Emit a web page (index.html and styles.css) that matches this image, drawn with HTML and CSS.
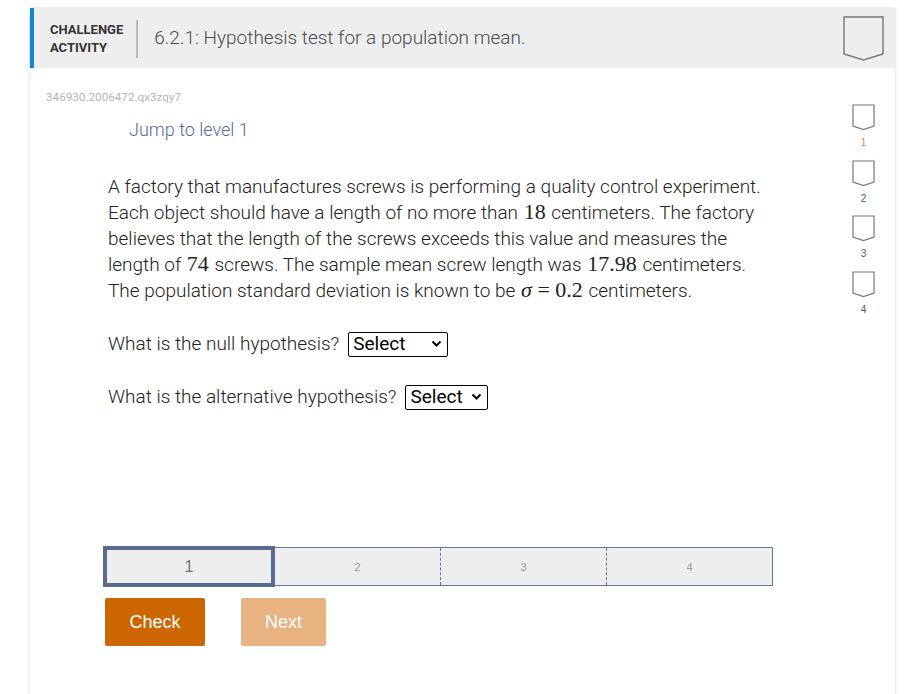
FILE: index.html
```html
<!DOCTYPE html>
<html>
<head>
<meta charset="utf-8">
<link rel="stylesheet" href="styles.css">
</head>
<body>
<div class="card">
  <div class="header">
    <div class="kind">CHALLENGE<br>ACTIVITY</div>
    <div class="title">6.2.1: Hypothesis test for a population mean.</div>
    <svg class="big-shield" width="42" height="46" viewBox="0 0 42 46"><path d="M1 1 H40 V38 L20.5 44 L1 38 Z" fill="none" stroke="#777" stroke-width="1.4"/></svg>
  </div>
  <div class="body">
    <div class="main">
      <div class="uid">346930.2006472.qx3zqy7</div>
      <div class="jump">Jump to level 1</div>
      <p class="problem">A factory that manufactures screws is performing a quality control experiment. Each object should have a length of no more than <span class="m">18</span> centimeters. The factory believes that the length of the screws exceeds this value and measures the length of <span class="m">74</span> screws. The sample mean screw length was <span class="m">17.98</span> centimeters. The population standard deviation is known to be <span class="m"><i>σ</i> = 0.2</span> centimeters.</p>
      <div class="q">What is the null hypothesis? <span class="sel sel-wide">Select<svg width="11" height="8" viewBox="0 0 11 8"><path d="M1.5 1.5 L5.5 5.5 L9.5 1.5" fill="none" stroke="#000" stroke-width="2"/></svg></span></div>
      <div class="q">What is the alternative hypothesis? <span class="sel">Select<svg width="11" height="8" viewBox="0 0 11 8"><path d="M1.5 1.5 L5.5 5.5 L9.5 1.5" fill="none" stroke="#000" stroke-width="2"/></svg></span></div>
      <div class="levels">
        <div class="lv lv-cur">1</div>
        <div class="lv">2</div>
        <div class="lv">3</div>
        <div class="lv">4</div>
      </div>
      <div class="buttons">
        <button class="btn check">Check</button>
        <button class="btn next">Next</button>
      </div>
    </div>
    <div class="side">
      <div class="lvl-icon"><svg width="23" height="27" viewBox="0 0 23 27"><path d="M1 1 H22 V22 L11.5 25.5 L1 22 Z" fill="none" stroke="#777" stroke-width="1.2"/></svg><span class="num cur">1</span></div>
      <div class="lvl-icon"><svg width="23" height="27" viewBox="0 0 23 27"><path d="M1 1 H22 V22 L11.5 25.5 L1 22 Z" fill="none" stroke="#777" stroke-width="1.2"/></svg><span class="num">2</span></div>
      <div class="lvl-icon"><svg width="23" height="27" viewBox="0 0 23 27"><path d="M1 1 H22 V22 L11.5 25.5 L1 22 Z" fill="none" stroke="#777" stroke-width="1.2"/></svg><span class="num">3</span></div>
      <div class="lvl-icon"><svg width="23" height="27" viewBox="0 0 23 27"><path d="M1 1 H22 V22 L11.5 25.5 L1 22 Z" fill="none" stroke="#777" stroke-width="1.2"/></svg><span class="num">4</span></div>
    </div>
  </div>
</div>
</body>
</html>
```

FILE: styles.css
```css
* { box-sizing: border-box; }
html, body { margin: 0; padding: 0; background: #fff; }
body { font-family: Roboto, "Liberation Sans", sans-serif; color: #333; }

.card {
  margin: 8px 0 0 30px;
  width: 865px;
  height: 700px;
  background: #fff;
  box-shadow: -1px 0 2px rgba(0,0,0,0.10), 1px 0 2px rgba(0,0,0,0.10);
}

.header {
  height: 60px;
  background: #eee;
  border-left: 4px solid #0f86d6;
  display: flex;
  align-items: center;
  padding-left: 16px;
  padding-right: 10px;
}
.kind {
  font-size: 13px;
  font-weight: 700;
  line-height: 18px;
  color: #333;
  padding-right: 13px;
  border-right: 2px solid #bbb;
  height: 38px;
  display: flex;
  align-items: center;
  margin-top: 1px;
}
.title {
  flex: 1;
  font-size: 19px;
  font-weight: 300;
  color: #4a4a4a;
  padding-left: 16px;
  margin-top: -2px;
}
.big-shield { display: block; margin-top: 2px; }

.body { display: flex; }
.main { flex: 1; padding-left: 16px; }
.uid { font-size: 11.7px; color: #b5b5b5; margin-top: 22px; line-height: 14px; }
.jump { font-size: 18px; font-weight: 300; color: #4f6a98; margin: 16px 0 0 83px; line-height: 20px; }
.problem {
  margin: 34px 0 0 62px;
  width: 662px;
  font-size: 19px;
  font-weight: 300;
  line-height: 26px;
  color: #222;
}
.m {
  display: inline-block;
  font-family: "Liberation Serif", "DejaVu Serif", serif;
  font-size: 22px; line-height: 20px; font-weight: 400;
  margin: 0 1px;
}
.m i { font-style: italic; }
.q { margin: 27px 0 0 62px; font-size: 19px; font-weight: 300; line-height: 26px; display: flex; align-items: center; color: #222; }
.sel {
  display: inline-flex; align-items: center; justify-content: space-between;
  border: 1px solid #000; border-radius: 2px;
  height: 25px; padding: 0 5px 0 4px; margin-left: 9px;
  font-size: 19px; font-weight: 400; color: #000; gap: 8px;
}
.sel-wide { width: 100px; }
.sel svg { display: block; }

.levels {
  display: flex;
  margin: 137px 0 0 58px;
  width: 669px;
  height: 39px;
  border: 1px solid #5a79a0;
  background: #eee;
}
.lv {
  flex: 1;
  display: flex; align-items: center; justify-content: center;
  font-family: "Liberation Sans", Arial, sans-serif;
  font-size: 11px; color: #999;
  border-left: 1px dashed #5a79a0;
}
.lv:nth-child(2) { border-left: none; }
.lv-cur {
  border: 4px solid #566b8e;
  margin: -2px 0 -2px -2px;
  font-size: 17px; color: #777;
  flex: 0 0 172px;
}
.buttons { display: flex; gap: 36px; margin: 12px 0 0 59px; }
.btn {
  border: none; border-radius: 2px;
  font-family: "Liberation Sans", Arial, sans-serif;
  font-size: 18px; color: #fff; height: 48px;
}
.check { background: #cc6600; width: 100px; }
.next { background: #e7b380; width: 85px; }

.side { width: 62px; display: flex; flex-direction: column; align-items: center; padding-top: 36px; padding-right: 1px; }
.lvl-icon { display: flex; flex-direction: column; align-items: center; height: 55.7px; }
.lvl-icon svg { display: block; }
.num { font-family: "Liberation Sans", Arial, sans-serif; font-size: 10px; color: #556; margin-top: 6px; }
.num.cur { color: #e8804a; }
```
